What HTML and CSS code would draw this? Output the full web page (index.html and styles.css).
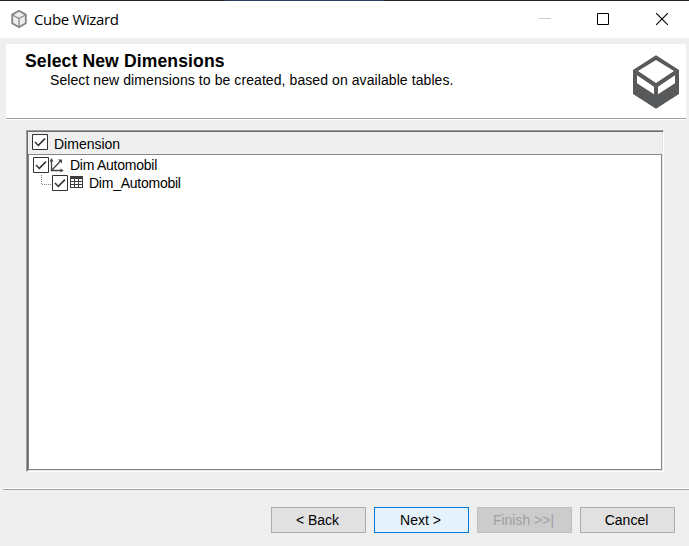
FILE: index.html
```html
<!DOCTYPE html>
<html lang="en">
<head>
<meta charset="utf-8">
<title>Cube Wizard</title>
<link rel="stylesheet" href="styles.css">
</head>
<body>
<div class="window">
  <header class="titlebar">
    <svg class="app-icon" width="18" height="20" viewBox="0 0 18 20"><path d="M9 1.7 15.8 5.6V14.2L9 18.2 2.2 14.2V5.6Z" fill="#eeeeef" stroke="#858585" stroke-width="1.8"/><path d="M3 6.2 9 9.5 15 6.2M9 9.5V17.5" fill="none" stroke="#8c8c8c" stroke-width="1.3"/></svg>
    <span class="caption">Cube Wizard</span>
    <div class="controls">
      <svg width="12" height="12" viewBox="0 0 12 12"><path d="M0 5.5H12" stroke="#ccc"/></svg>
      <svg width="12" height="12" viewBox="0 0 12 12"><path d="M.5.5H11.5V11.5H.5Z" fill="none" stroke="#000"/></svg>
      <svg width="12" height="12" viewBox="0 0 12 12"><path d="M0 0 12 12M12 0 0 12" stroke="#000" stroke-width="1.1"/></svg>
    </div>
  </header>
  <section class="banner">
    <div class="banner-text">
      <h1>Select New Dimensions</h1>
      <p>Select new dimensions to be created, based on available tables.</p>
    </div>
    <svg class="logo" width="46" height="54" viewBox="0 0 138 162"><path fill="#58595b" fill-rule="evenodd" d="M69 1 138 45V117L69 161 0 117V45ZM69 15 15 48 69 84 123 48ZM12 61V85L63 118V95ZM126 61V85L75 118V95Z"/></svg>
  </section>
  <main class="list">
    <div class="list-head">
      <svg class="check" width="16" height="16" viewBox="0 0 16 16"><path class="box" d="M.5.5H15.5V15.5H.5Z"/><path class="tick" d="M3 8 6.3 11.4 13 4.6"/></svg>
      <span>Dimension</span>
    </div>
    <div class="tree">
      <div class="row">
        <svg class="check" width="16" height="16" viewBox="0 0 16 16"><path class="box" d="M.5.5H15.5V15.5H.5Z"/><path class="tick" d="M3 8 6.3 11.4 13 4.6"/></svg>
        <svg class="axes" width="15" height="15" viewBox="0 0 15 15"><path d="M2.5 2V12.5H13M2.5 12.5 12 2.5" fill="none" stroke="#444" stroke-width="1.3"/><path d="M.5 3.5 2.5 0 4.5 3.5ZM9 1.5H13V5.5ZM11.5 10.5 14.7 12.5 11.5 14.5Z" fill="#444"/></svg>
        <span class="label">Dim Automobil</span>
      </div>
      <div class="row child">
        <svg class="branch" width="12" height="18" viewBox="0 0 12 18"><path d="M.5 1V10.5H12" fill="none" stroke="#808080" stroke-dasharray="1 1"/></svg>
        <svg class="check" width="16" height="16" viewBox="0 0 16 16"><path class="box" d="M.5.5H15.5V15.5H.5Z"/><path class="tick" d="M3 8 6.3 11.4 13 4.6"/></svg>
        <svg class="table" width="13" height="12" viewBox="0 0 13 12"><path fill="#3c3c3c" fill-rule="evenodd" d="M0 0H13V12H0ZM1 3V5H4V3ZM5 3V5H8V3ZM9 3V5H12V3ZM1 6V8H4V6ZM5 6V8H8V6ZM9 6V8H12V6ZM1 9V11H4V9ZM5 9V11H8V9ZM9 9V11H12V9Z"/></svg>
        <span class="label sub">Dim_Automobil</span>
      </div>
    </div>
  </main>
  <footer class="footer">
    <button>&lt; Back</button>
    <button class="default">Next &gt;</button>
    <button disabled>Finish &gt;&gt;|</button>
    <button>Cancel</button>
  </footer>
</div>
</body>
</html>
```
FILE: styles.css
```css
* { box-sizing: border-box; }
body { margin: 0; font: 14px/18px "Liberation Sans", Arial, sans-serif; color: #000; }
svg { display: block; flex: none; }
span, p, h1 { white-space: nowrap; }
.window {
  width: 689px; height: 546px; overflow: hidden;
  display: flex; flex-direction: column;
  background: #efefef;
}
.titlebar {
  height: 38px; flex: none;
  display: flex; align-items: center;
  padding: 0 21px 0 10px;
  background: linear-gradient(90deg, #252326 225px, #2f3d63 225px 384px, #252326 384px) top / 100% 1px no-repeat #fff;
}
.caption { margin-left: 6px; font: 15px/20px "Open Sans", "Noto Sans", sans-serif; letter-spacing: -0.35px; }
.controls { margin-left: auto; display: flex; gap: 46px; }
.controls svg:first-child { margin: 0 1px 0 -1px; }
.controls svg:nth-child(2) { margin: 0 1px 0 -1px; }
.banner {
  height: 76px; flex: none; margin: 6px 3px 0 6px;
  display: flex; justify-content: space-between;
  padding: 8px 7px 0 19px;
  background: #fff;
  border-bottom: 1px solid #fff;
  box-shadow: inset 0 -1px #a0a0a0;
}
h1 { margin: 0; font-size: 17.6px; line-height: 19px; font-weight: bold; letter-spacing: 0.1px; }
.banner p { margin: 0 0 0 25px; line-height: 19px; letter-spacing: 0.08px; }
.logo { margin-top: 3px; }
.list {
  width: 638px; height: 342px; flex: none; margin: 10px 0 0 26px;
  display: flex; flex-direction: column;
  border: 1px solid; border-color: #a0a0a0 #fff #fff #a0a0a0;
  box-shadow: inset 1px 1px #696969, inset -1px -1px #e3e3e3;
  padding: 1px;
}
.list-head { height: 22px; flex: none; display: flex; padding: 2px 0 0 4px; }
.list-head span { margin-left: 6px; padding-top: 1px; }
.tree { flex: 1; background: #fff; border: 1px solid #828790; padding: 1px 0 0 4px; }
.row { height: 18px; display: flex; }
.check { margin-top: 1px; }
.list-head .check { margin-top: 0; }
.box { fill: #fff; stroke: #333; }
.tick { fill: none; stroke: #333; stroke-width: 1.5; }
.axes { margin: 2px 0 0 0; }
.label { margin-left: 6px; letter-spacing: -0.25px; }
.child { padding-left: 8px; }
.branch { margin-right: -1px; }
.table { margin: 2px 0 0 2px; }
.footer {
  flex: 1; margin: 16px 0 0 3px;
  display: flex; justify-content: flex-end; align-items: flex-start; gap: 8px;
  padding: 18px 14px 0 0;
  border-top: 1px solid #fff;
  box-shadow: inset 0 1px #a0a0a0;
}
button {
  width: 95px; height: 26px; padding: 0 2px 0 0;
  font: inherit; color: #000; text-align: center;
  background: #e1e1e1; border: 1px solid #adadad; border-radius: 0;
}
.default { background: #e5f1fb; border-color: #0078d7; }
button:disabled { background: #ccc; border-color: #bfbfbf; color: #a0a0a0; }
```
